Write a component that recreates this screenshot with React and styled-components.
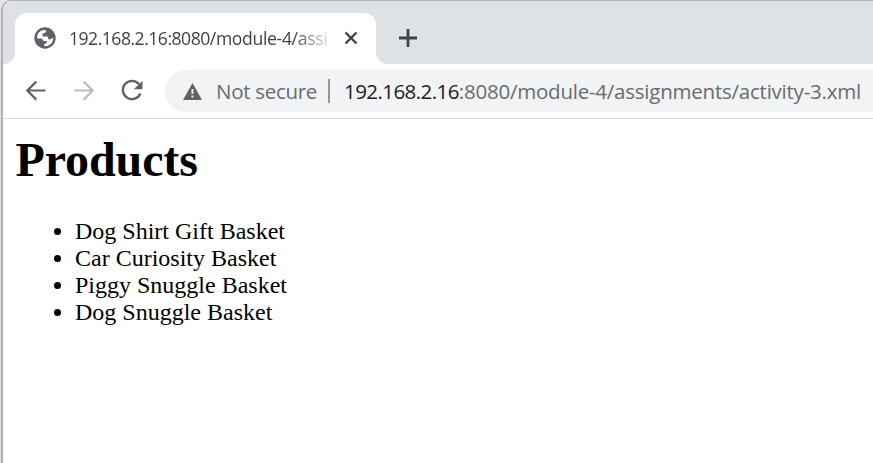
import React from "react";
import styled, { createGlobalStyle } from "styled-components";

const Global = createGlobalStyle`
  html, body { margin: 0; background: #fff; overflow: hidden; }
  * { box-sizing: border-box; }
`;
const Frame = styled.div`
  width: 873px;
  height: 463px;
  background: #e3e3e3;
  padding-left: 1px;
  overflow: hidden;
`;
const Window = styled.div`
  height: 463px;
  border-left: 2px solid #b2b2b2;
  border-top: 1px solid #b2b2b2;
  border-top-left-radius: 11px;
  background: #fff;
  overflow: hidden;
`;
const TabStrip = styled.div`
  height: 63px;
  display: flex;
  background: #fff;
`;
const StripEdge = styled.div`
  width: 12px;
  background: #dee1e6;
  border-bottom-right-radius: 12px;
`;
const TabSlot = styled.div`
  width: 361px;
  padding-top: 12px;
  background: #dee1e6;
`;
const Tab = styled.div`
  height: 51px;
  background: #fff;
  border-radius: 12px 12px 0 0;
  display: flex;
  align-items: center;
  padding: 0 0 1px 18px;
`;
const TabTitle = styled.div`
  width: 264px;
  margin: 0 9px 1px 12px;
  overflow: hidden;
  white-space: nowrap;
  font: 17.6px/24px "Open Sans", "Noto Sans", sans-serif;
  letter-spacing: -0.34px;
  color: #3f4246;
  mask-image: linear-gradient(90deg, #000 224px, transparent 266px);
`;
const TabHost = styled.span`
  letter-spacing: -0.5px;
`;
const StripRest = styled.div`
  flex: 1;
  background: #dee1e6;
  border-bottom-left-radius: 12px;
  padding: 27px 0 0 22px;
`;
const Toolbar = styled.div`
  height: 55px;
  border-bottom: 1px solid #dadce0;
  display: flex;
  align-items: center;
  padding-left: 20px;
  gap: 22px;
`;
const Omnibox = styled.div`
  flex: 1;
  height: 42px;
  margin-left: -2px;
  background: #f1f3f4;
  border-radius: 21px 0 0 21px;
  display: flex;
  align-items: center;
  padding-left: 18px;
  white-space: nowrap;
  font: 20.5px/30px "Open Sans", "Noto Sans", sans-serif;
  color: #686b70;
`;
const Security = styled.span`
  width: 112px;
  margin-left: 14px;
  letter-spacing: -0.3px;
`;
const Divider = styled.span`
  width: 2px;
  height: 24px;
  background: #96999c;
`;
const Url = styled.span`
  margin-left: 14px;
  letter-spacing: -0.23px;
`;
const Host = styled.span`
  color: #202124;
  letter-spacing: -0.57px;
`;
const Icon = styled.svg`
  display: block;
  flex: none;
`;
const Page = styled.main`
  padding: 14px 12px 0;
  font: 24px/27px "Liberation Serif", "Times New Roman", serif;
  color: #000;
`;
const Title = styled.h1`
  margin: 0;
  padding-left: 0.5px;
  font-size: 48px;
  line-height: 54px;
  letter-spacing: -0.1px;
`;
const List = styled.ul`
  margin: 31px 0 0;
  padding-left: 60px;
`;

const products = [
  "Dog Shirt Gift Basket",
  "Car Curiosity Basket",
  "Piggy Snuggle Basket",
  "Dog Snuggle Basket",
];

const Globe = () => (
  <Icon width="24" height="24" viewBox="0 0 24 24">
    <circle cx="12" cy="12" r="10.7" fill="#5f6368" />
    <path fill="#fff" d="M4.2 10.3C4.8 6.8 7.6 4.3 11.2 4h1.6v1.3c0 1.1-.7 2-1.8 2H9.6v2.2c0 .6-.3 1-1 1h4.9c1 0 1.7.6 1.7 1.6v1.2h2.1c1 0 1.5-.5 1.5-1.4h1.4c0 4.8-3.5 8.2-8 8.2h-1v-2.2c1.8 0 2.6-.7 2.6-2v-1h-2.3c-1.5 0-2.2-.8-2.2-2.3H4.2z" />
  </Icon>
);
const Arrow = ({ color, forward }) => (
  <Icon width="26" height="26" viewBox="0 0 26 26" fill="none" stroke={color} strokeWidth="2.2">
    {forward ? <path d="M3.5 12.5h18M12.7 3.6l9 9-9 9" /> : <path d="M22.5 12.5h-18M13.3 3.6l-9 9 9 9" />}
  </Icon>
);
const Reload = () => (
  <Icon width="26" height="26" viewBox="0 0 26 26">
    <path d="M20 6.2A9.1 9.1 0 1 0 21.4 15.5" fill="none" stroke="#5f6368" strokeWidth="2.4" />
    <path d="M23.5 2.7v8.6h-8.7z" fill="#5f6368" />
  </Icon>
);
const Warning = () => (
  <Icon width="19" height="17" viewBox="0 0 19 17">
    <path d="M9.5 0 19 17H0z" fill="#5f6368" />
    <path d="M9.5 6v5M9.5 12.5v2" stroke="#f1f3f4" strokeWidth="2" />
  </Icon>
);
const Close = () => (
  <Icon width="18" height="18" viewBox="0 0 18 18">
    <path d="m3.5 3.5 11 11m0-11-11 11" stroke="#3f4246" strokeWidth="2.4" />
  </Icon>
);
const Plus = () => (
  <Icon width="20" height="20" viewBox="0 0 20 20">
    <path d="M10 1v18M1 10h18" stroke="#3f4246" strokeWidth="2.8" />
  </Icon>
);

export default function App() {
  return (
    <Frame>
      <Global />
      <Window>
        <TabStrip>
          <StripEdge />
          <TabSlot>
            <Tab>
              <Globe />
              <TabTitle><TabHost>192.168.2.16:8080</TabHost>/module-4/assi</TabTitle>
              <Close />
            </Tab>
          </TabSlot>
          <StripRest><Plus /></StripRest>
        </TabStrip>
        <Toolbar>
          <Arrow color="#5f6368" />
          <Arrow color="#babcbe" forward />
          <Reload />
          <Omnibox>
            <Warning />
            <Security>Not secure</Security>
            <Divider />
            <Url><Host>192.168.2.16</Host>:8080/module-4/assignments/activity-3.xml</Url>
          </Omnibox>
        </Toolbar>
        <Page>
          <Title>Products</Title>
          <List>{products.map((name) => <li key={name}>{name}</li>)}</List>
        </Page>
      </Window>
    </Frame>
  );
}
